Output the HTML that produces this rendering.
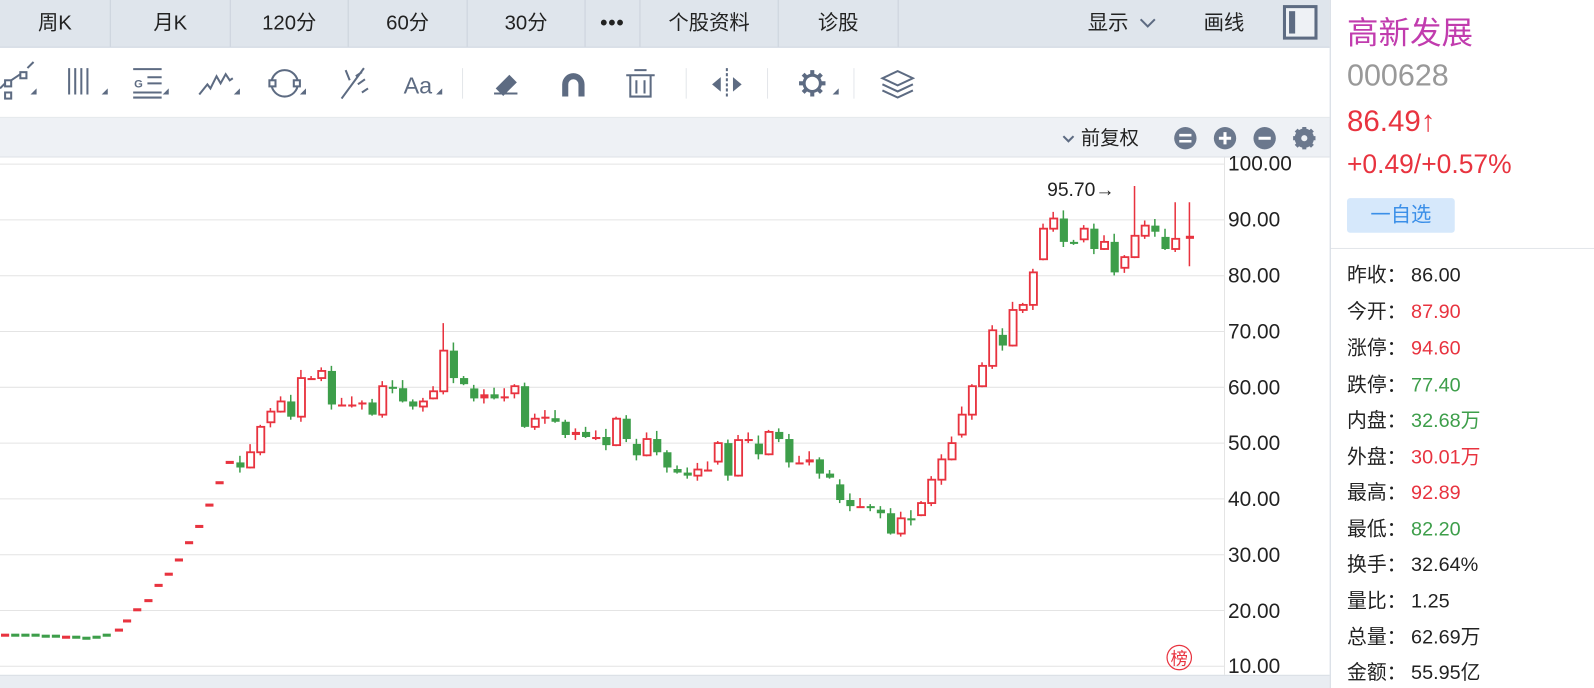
<!DOCTYPE html>
<html><head><meta charset="utf-8"><style>
*{margin:0;padding:0;box-sizing:border-box}
body{width:1594px;height:688px;overflow:hidden;background:#fff;font-family:"Liberation Sans","Noto Sans CJK SC",sans-serif}
#w{position:absolute;left:0;top:0;width:1568px;height:677px;transform:scale(1.0166,1.0163);transform-origin:0 0;overflow:hidden}
.abs{position:absolute}
#tabs{left:0;top:0;width:1308px;height:47px;background:#dfe5ec;border-bottom:1px solid #c9d1dc}
.tab{position:absolute;top:0;height:46px;line-height:46px;text-align:center;font-size:20px;color:#222;border-right:1px solid #cbd2dc}
#tool{left:0;top:47px;width:1308px;height:69px;background:#fff;border-bottom:1px solid #e3e6ea}
#sub{left:0;top:116px;width:1308px;height:39px;background:#eef1f5;border-bottom:1px solid #dde1e6}
#chart{left:0;top:155px;width:1308px;height:509px;background:#fff}
#bot{left:0;top:664px;width:1308px;height:13px;background:#e9edf2;border-top:1px solid #dadfe5}
#panel{left:1308px;top:0;width:260px;height:677px;background:#fff;border-left:1px solid #cfd6df}
.ax{position:absolute;left:1208px;font-size:20.5px;color:#222}
.row{position:absolute;left:16px;font-size:19.5px;color:#222;white-space:nowrap;line-height:26px}
.row b{display:inline-block;width:63px;font-weight:normal}
.r{color:#e8333f}.g{color:#3d9e4a}
</style></head><body><div id="w">
<div id="tabs" class="abs">
<div class="tab" style="left:0;width:109px">周K</div>
<div class="tab" style="left:109px;width:118px">月K</div>
<div class="tab" style="left:227px;width:116px">120分</div>
<div class="tab" style="left:343px;width:117px">60分</div>
<div class="tab" style="left:460px;width:116px">30分</div>
<div class="tab" style="left:576px;width:54px;font-weight:bold;letter-spacing:1px">•••</div>
<div class="tab" style="left:630px;width:136px">个股资料</div>
<div class="tab" style="left:766px;width:118px">诊股</div>
<div class="abs" style="left:1070px;top:0;line-height:46px;font-size:20px;color:#222">显示 <svg width="18" height="12" viewBox="0 0 18 12" style="margin-left:4px"><path d="M2 2l7 7 7-7" fill="none" stroke="#5d6b82" stroke-width="2"/></svg></div>
<div class="abs" style="left:1184px;top:0;line-height:46px;font-size:20px;color:#222">画线</div>
<div class="abs" style="left:1262px;top:5px;width:34px;height:34px;border:3px solid #5d6b82;background:#eef1f5"><div style="position:absolute;left:3px;top:3px;width:6px;height:22px;background:#5d6b82"></div></div>
</div>
<div id="tool" class="abs">
<svg width="900" height="69" style="position:absolute;left:0;top:0" fill="none" stroke="#5d6b82" stroke-width="2">
<rect x="5" y="32" width="6" height="6"/><rect x="20" y="24" width="6" height="6"/><rect x="5" y="44" width="6" height="6" /><path d="M0 40l5-5M11 32l9-6M27 20l6-6"/>
<path d="M68 20v26M74 20v26M80 20v26M86 20v26"/>
<path d="M131 21h28M131 44h28M131 49h28M145 29h14M145 35h14"/><text x="132" y="39" font-size="11" fill="#5d6b82" stroke="none" font-weight="bold">G</text>
<path d="M196 46l8-10 3 4 6-12 4 7 5-9 4 6 3-2"/>
<circle cx="280" cy="35" r="13"/><rect x="265" y="32" width="6" height="6" fill="#fff"/><rect x="289" y="32" width="6" height="6" fill="#fff"/>
<path d="M336 50l22-30M340 22l4 10M350 28l6-4M352 36l7-5M356 44l6-4"/>
<text x="397" y="45" font-size="23" fill="#5d6b82" stroke="none" font-family="Liberation Sans">Aa</text>
<path d="M486 45h23" /><path d="M489 40l12-12 6 6-12 12z" fill="#5d6b82"/>
<path d="M556 48v-12a8 8 0 0 1 16 0v12" stroke-width="6"/>
<path d="M616 27h28M624 22h12M620 28v20h20v-20M626 32v13M634 32v13"/>
<path d="M715 20v30" stroke-dasharray="3 2"/><path d="M702 36l6-5v10zM728 36l-6-5v10z" fill="#5d6b82"/>
<circle cx="799" cy="35" r="8" stroke-width="3"/><path d="M799 22v5M799 43v5M786 35h5M807 35h5M790 26l3 3M805 41l3 3M790 44l3-3M805 29l3-3" stroke-width="4"/>
<path d="M868 30l15-7 15 7-15 7zM868 36l15 7 15-7M868 42l15 7 15-7"/>
<path d="M455 20v30M675 20v30M755 20v30M840 20v30" stroke="#e3e6ea" stroke-width="1"/>
<path d="M30 46h6v-6zM100 46h6v-6zM160 46h6v-6zM230 46h6v-6zM295 46h6v-6zM429 46h6v-6zM819 46h6v-6z" fill="#5d6b82" stroke="none"/>
</svg>
</div>
<div id="sub" class="abs">
<div class="abs" style="left:1044px;top:5px;font-size:19px;color:#222"><svg width="14" height="10" viewBox="0 0 14 10"><path d="M2 2l5 5 5-5" fill="none" stroke="#5d6b82" stroke-width="2"/></svg> 前复权</div>
<svg width="150" height="39" style="position:absolute;left:1150px;top:0">
<circle cx="16" cy="20" r="11" fill="#6b788d"/><path d="M10 17h12M10 23h12" stroke="#fff" stroke-width="2.5"/>
<circle cx="55" cy="20" r="11" fill="#6b788d"/><path d="M49 20h12M55 14v12" stroke="#fff" stroke-width="3"/>
<circle cx="94" cy="20" r="11" fill="#6b788d"/><path d="M88 20h12" stroke="#fff" stroke-width="3"/>
<circle cx="133" cy="20" r="7" fill="none" stroke="#6b788d" stroke-width="5"/><path d="M133 9v22M122 20h22M125 12l16 16M125 28l16-16" stroke="#6b788d" stroke-width="4"/><circle cx="133" cy="20" r="3" fill="#eef1f5"/>
</svg>
</div>
<div id="chart" class="abs"><svg id="cs" width="1308" height="509"></svg></div>
<div id="bot" class="abs"></div>
<div class="ax" style="top:150px">100.00</div>
<div class="ax" style="top:205px">90.00</div>
<div class="ax" style="top:260px">80.00</div>
<div class="ax" style="top:315px">70.00</div>
<div class="ax" style="top:370px">60.00</div>
<div class="ax" style="top:425px">50.00</div>
<div class="ax" style="top:480px">40.00</div>
<div class="ax" style="top:535px">30.00</div>
<div class="ax" style="top:590px">20.00</div>
<div class="ax" style="top:644px">10.00</div>
<div id="panel" class="abs">
<div class="abs" style="left:16px;top:7px;font-size:31px;color:#c13cae">高新发展</div>
<div class="abs" style="left:16px;top:58px;font-size:30px;color:#999">000628</div>
<div class="abs" style="left:16px;top:104px;font-size:29px;color:#e8333f">86.49↑</div>
<div class="abs" style="left:16px;top:146px;font-size:26px;color:#e8333f">+0.49/+0.57%</div>
<div class="abs" style="left:16px;top:195px;width:106px;height:34px;background:#d6e8fb;border-radius:3px;color:#3b8fe8;font-size:20px;line-height:34px;text-align:center">一自选</div>
<div class="abs" style="left:0;top:244px;width:260px;border-top:1px solid #e3e6ea"></div>
<div class="row" style="top:258px"><b>昨收：</b>86.00</div>
<div class="row" style="top:294px"><b>今开：</b><span class="r">87.90</span></div>
<div class="row" style="top:330px"><b>涨停：</b><span class="r">94.60</span></div>
<div class="row" style="top:366px"><b>跌停：</b><span class="g">77.40</span></div>
<div class="row" style="top:401px"><b>内盘：</b><span class="g">32.68万</span></div>
<div class="row" style="top:437px"><b>外盘：</b><span class="r">30.01万</span></div>
<div class="row" style="top:472px"><b>最高：</b><span class="r">92.89</span></div>
<div class="row" style="top:508px"><b>最低：</b><span class="g">82.20</span></div>
<div class="row" style="top:543px"><b>换手：</b>32.64%</div>
<div class="row" style="top:579px"><b>量比：</b>1.25</div>
<div class="row" style="top:614px"><b>总量：</b>62.69万</div>
<div class="row" style="top:649px"><b>金额：</b>55.95亿</div>
</div>
</div>
<script>
var s=document.getElementById('cs'),h='';
for(var i=0;i<10;i++){var y=6.5+i*54.9;h+='<line x1="0" x2="1204" y1="'+y+'" y2="'+y+'" stroke="#e4e4e4"/>';}
h+='<line x1="1204.5" x2="1204.5" y1="0" y2="509" stroke="#e4e4e4"/>';
var d=[[5,625],[15,625],[25,625],[35,625],[45,626],[55,626],[65,627],[75,627],[85,628],[95,627],[105,625],[117,620],[125,611],[135,600],[146,591],[156,576],[166,565],[176,551],[186,534],[196,518],[206,497],[216,475],[226,455],[236,460],[246,445],[256,420],[266,405],[276,395],[286,410],[296,372],[306,372],[316,365],[326,398],[336,398],[346,398],[356,396],[366,408],[376,380],[386,382],[396,395],[406,400],[416,395],[426,385],[436,345],[446,372],[456,378],[466,392],[476,388],[486,392],[496,390],[506,380],[516,420],[526,412],[536,410],[546,415],[556,428],[566,425],[576,430],[586,430],[596,438],[606,412],[616,432],[626,448],[636,432],[646,445],[656,460],[666,465],[676,468],[686,462],[696,462],[706,436],[716,468],[726,433],[736,432],[746,447],[756,425],[766,432],[776,455],[786,455],[796,452],[806,466],[816,470],[826,492],[836,498],[846,498],[856,500],[866,505],[876,525],[886,510],[896,512],[906,495],[916,472],[926,452],[936,436],[946,408],[956,380],[966,360],[976,325],[986,340],[996,305],[1006,300],[1016,268],[1026,225],[1036,215],[1046,238],[1056,240],[1066,225],[1076,245],[1086,238],[1096,268],[1106,253],[1116,232],[1126,222],[1136,228],[1146,245],[1156,235],[1170,232]];
var R='#e8333f',G='#3d9e4a';
for(var k=0;k<d.length;k++){var x=d[k][0],c=d[k][1]-155,o=k?d[k-1][1]-155:c;
 if(x<230){var col=(k%3==0||x>110)?R:G;if(x<110&&k%2)col=G;h+='<rect x="'+(x-4)+'" y="'+(c-1.5)+'" width="8" height="3" fill="'+col+'"/>';continue;}
 if(k%4==2){o=o+(c-o)*0.3;}
 var up=c<=o,col=up?R:G,t=Math.min(c,o),b=Math.max(c,o),hh=Math.max(b-t,2);
 var wt=t-(k%5)*1.5-2,wb=b+(k%3)*2+1;
 if(x==436)wt=318-155; if(x==1116)wt=183-155; if(x==1156||x==1170)wt=199-155; if(x==1170)wb=262-155;
 h+='<line x1="'+x+'" x2="'+x+'" y1="'+wt+'" y2="'+wb+'" stroke="'+col+'" stroke-width="1.5"/>';
 if(up&&hh>4)h+='<rect x="'+(x-3)+'" y="'+t+'" width="7" height="'+hh+'" fill="#fff" stroke="'+col+'" stroke-width="1.8"/>';
 else h+='<rect x="'+(x-3.5)+'" y="'+t+'" width="8" height="'+hh+'" fill="'+col+'"/>';}
h+='<text x="1030" y="38" font-size="19" fill="#222" font-family="Liberation Sans">95.70→</text>';
h+='<circle cx="1160" cy="492" r="12" fill="none" stroke="'+R+'" stroke-width="1.2"/><text x="1160" y="499" font-size="17" fill="'+R+'" text-anchor="middle" font-family="Noto Sans CJK SC">榜</text>';
s.innerHTML=h;
</script>
</body></html>
